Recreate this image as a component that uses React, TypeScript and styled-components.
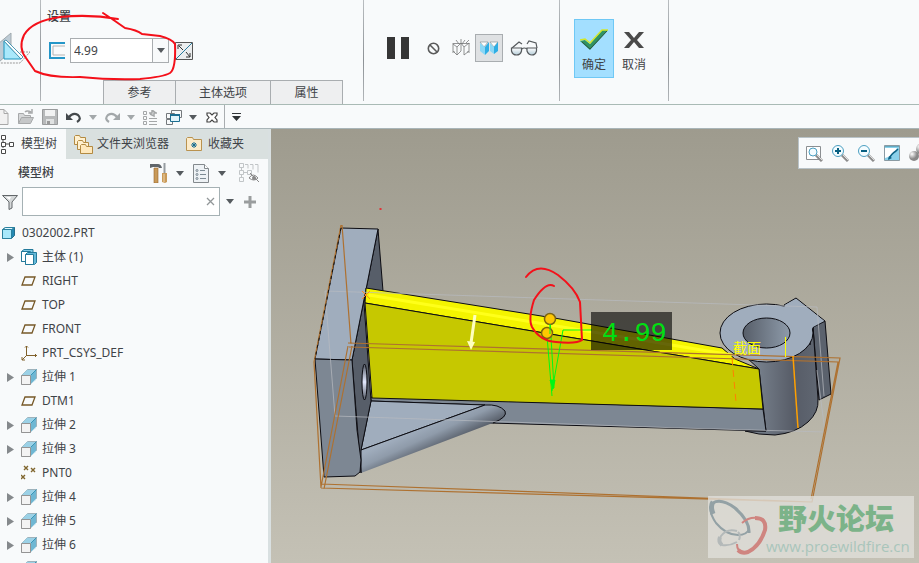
import React from "react";
import styled, { createGlobalStyle } from "styled-components";

const GlobalStyle = createGlobalStyle`
  * { box-sizing: border-box; }
  body { margin: 0; background: #f8fafb; }
  body, button, input {
    font-family: "Noto Sans", "Noto Sans CJK SC", sans-serif;
    font-size: 12px;
    line-height: 16px;
    color: #3f4347;
  }
  button { background: none; border: 0; padding: 0; cursor: pointer; }
  svg { display: block; flex: none; }
`;

const Page = styled.div`
  display: flex;
  flex-direction: column;
  height: 100vh;
  overflow: hidden;
`;

/* Ribbon */
const Ribbon = styled.header`
  position: relative;
  display: flex;
  flex: none;
  height: 105px;
  border-bottom: 1px solid #a9bab5;
`;
const Divider = styled.div`
  flex: none;
  width: 1px;
  margin-bottom: 3px;
  background: linear-gradient(#b9bdc0, #8d9296 60%, #b2b6b9);
`;
const FeatureSection = styled.section`
  flex: none;
  width: 40px;
  padding-top: 32px;
`;
const SettingsSection = styled.section`
  display: flex;
  flex-direction: column;
  flex: none;
  width: 322px;
  padding: 9px 0 0 6px;
`;
const SettingsTitle = styled.h2`
  margin: 0;
  font-size: 12px;
  line-height: 16px;
  font-weight: 500;
`;
const SettingsRow = styled.div`
  display: flex;
  align-items: center;
  gap: 5px;
  margin: 13px 0 17px 2px;
`;
const Combo = styled.label`
  display: flex;
  width: 99px;
  height: 25px;
  border: 1px solid #a9adb0;
  background: #fff;
`;
const ComboInput = styled.input`
  flex: 1;
  min-width: 0;
  padding: 0 3px;
  border: 0;
  outline: 0;
  background: transparent;
`;
const ComboButton = styled.button`
  display: grid;
  place-items: center;
  width: 16px;
  border-left: 1px solid #a9adb0;
  background: #f8fafb;
`;
const FlyoutTabs = styled.div`
  display: flex;
  margin-left: 56px;
  border-left: 1px solid #a9adb0;
`;
const FlyoutTab = styled.button<{ $wide?: boolean }>`
  width: ${(p) => (p.$wide ? 95 : 72)}px;
  height: 24px;
  border: 1px solid #a9adb0;
  border-width: 1px 1px 0 0;
  background: #eeeff0;
`;
const ControlSection = styled.section`
  display: flex;
  align-items: center;
  gap: 6px;
  flex: none;
  width: 195px;
  height: 96px;
  padding-left: 21px;
`;
const ControlGroup = styled.div`
  display: flex;
`;
const ControlButton = styled.button<{ $active?: boolean }>`
  display: grid;
  place-items: center;
  width: 28px;
  height: 28px;
  border: 1px solid ${(p) => (p.$active ? "#a9adb0" : "transparent")};
  background: ${(p) => (p.$active ? "#dfe1e3" : "none")};
`;
const ConfirmSection = styled.section`
  display: flex;
  align-items: flex-start;
  flex: none;
  width: 108px;
  padding: 19px 14px;
`;
const ConfirmButton = styled.button<{ $primary?: boolean }>`
  display: flex;
  flex-direction: column;
  align-items: center;
  justify-content: flex-end;
  gap: 6px;
  width: 40px;
  height: 59px;
  padding-bottom: 4px;
  border: 1px solid ${(p) => (p.$primary ? "#6fc8f5" : "transparent")};
  background: ${(p) => (p.$primary ? "#a3dfff" : "none")};
`;
const RibbonMarkup = styled.svg`
  position: absolute;
  top: 0;
  left: 0;
  pointer-events: none;
`;

/* Quick access bar */
const QuickBar = styled.nav`
  display: flex;
  align-items: center;
  flex: none;
  height: 24px;
  border-bottom: 1px solid #a9b5b8;
`;
const QuickButton = styled.button<{ $narrow?: boolean }>`
  display: grid;
  place-items: center;
  width: ${(p) => (p.$narrow ? 14 : 24)}px;
  height: 23px;
  padding-top: 1px;
`;
const QuickDivider = styled.div`
  width: 1px;
  height: 23px;
  margin-right: 4px;
  background: #a9adb0;
`;

/* Body */
const Workspace = styled.main`
  display: flex;
  flex: 1;
  min-height: 0;
`;
const Sidebar = styled.aside`
  display: flex;
  flex-direction: column;
  flex: none;
  width: 271px;
  border-right: 3px solid #d9e0e1;
  overflow: hidden;
`;
const SideTabs = styled.div`
  display: flex;
  flex: none;
  height: 30px;
  background: #d9e0df;
`;
const SideTab = styled.button<{ $active?: boolean }>`
  display: flex;
  align-items: center;
  gap: ${(p) => (p.$active ? 6 : 4)}px;
  padding: ${(p) => (p.$active ? "0 9px 0 0" : "0 8px")};
  background: ${(p) => (p.$active ? "#f8fafb" : "none")};
  white-space: nowrap;
`;
const TreeHeader = styled.div`
  display: flex;
  align-items: center;
  justify-content: space-between;
  flex: none;
  height: 28px;
  padding: 0 8px 0 18px;
`;
const TreeTools = styled.div`
  display: flex;
  width: 111px;

  & > :last-child {
    margin-left: auto;
  }
`;
const TreeTitle = styled.h3`
  margin: 0;
  font-size: 12px;
  line-height: 16px;
  font-weight: 500;
`;
const ToolButton = styled.button<{ $arrow?: boolean }>`
  display: grid;
  place-items: center;
  width: ${(p) => (p.$arrow ? 22 : 20)}px;
  height: 24px;
`;
const FilterRow = styled.div`
  display: flex;
  align-items: center;
  flex: none;
  height: 29px;
  padding-left: 2px;
  gap: 4px;
`;
const FilterField = styled.label`
  display: flex;
  align-items: center;
  width: 198px;
  height: 29px;
  padding-right: 3px;
  border: 1px solid #a5b1b4;
  background: #fff;
`;
const FilterInput = styled.input`
  flex: 1;
  min-width: 0;
  border: 0;
  outline: 0;
  background: transparent;
`;
const FilterButton = styled.button`
  display: grid;
  place-items: center;
  width: 12px;
  height: 20px;
`;
const Tree = styled.ul`
  margin: 0;
  padding: 5px 0 0;
  list-style: none;
`;
const TreeRow = styled.li<{ $root?: boolean }>`
  display: flex;
  align-items: center;
  height: 24px;
  padding-left: ${(p) => (p.$root ? 1 : 5)}px;
  gap: 5px;
  white-space: nowrap;
`;
const Toggle = styled.button`
  width: 11px;
  height: 16px;
  display: grid;
  place-items: center;
`;
const TogglePlaceholder = styled.span`
  width: 11px;
`;

/* Viewport */
const Viewport = styled.section`
  position: relative;
  flex: 1;
  min-width: 0;
  overflow: hidden;
  background: linear-gradient(#9e9b8e, #c4c1b5);
`;
const Scene = styled.svg`
  width: 100%;
  height: 100%;
`;
const ViewToolbar = styled.div`
  position: absolute;
  top: 8px;
  right: 0;
  display: flex;
  align-items: center;
  width: 121px;
  height: 32px;
  padding-left: 2px;
  border: 1px solid #b9c3c8;
  border-right: 0;
  background: #f8fafb;
  overflow: hidden;
`;
const ViewButton = styled.button`
  display: grid;
  place-items: center;
  flex: none;
  width: 26px;
  height: 26px;
`;
const Watermark = styled.div`
  position: absolute;
  right: 5px;
  bottom: 5px;
  display: flex;
  width: 206px;
  height: 62px;
  background: rgba(224, 222, 218, 0.8);
`;
const WatermarkText = styled.div`
  display: flex;
  flex-direction: column;
  margin-left: -3px;
`;
const WatermarkName = styled.strong`
  padding-left: 12px;
  font-family: "Noto Sans CJK SC", sans-serif;
  font-size: 29px;
  line-height: 42px;
  font-weight: 900;
  color: #7cb389;
`;
const WatermarkUrl = styled.a`
  font-family: "Open Sans", sans-serif;
  font-size: 15px;
  line-height: 16px;
  color: #a9c5bb;
  text-decoration: none;
`;

/* Icons */
const Down = ({ color = "#555a5e", size = 8 }: { color?: string; size?: number }) => (
  <svg width={size} height="5" viewBox="0 0 8 5"><path d="M0 0h8L4 5z" fill={color} /></svg>
);
const RibFeatureIcon = () => (
  <svg width="32" height="34" viewBox="0 0 32 34">
    <path d="M-2 12 11 1v18L-2 31z" fill="#bdcbd5" stroke="#a0a9ae" />
    <path d="M20 20h10L20 31H0" fill="none" stroke="#999" strokeDasharray="2 1" />
    <path d="M4 9v18h17z" fill="#a9e8fb" stroke="#1c93bd" />
    <path d="m4 9 17 18 2-2L6 8z" fill="#fff" stroke="#4f98b3" />
  </svg>
);
const ThicknessIcon = () => (
  <svg width="16" height="17" viewBox="0 0 16 17">
    <path d="M16 1H1v15h15" fill="none" stroke="#2496c8" strokeWidth="2" />
    <path d="M16 4H4v9h12" fill="none" stroke="#b4b4b4" />
  </svg>
);
const FlipIcon = () => (
  <svg width="18" height="18" viewBox="0 0 18 18">
    <path d="M.5.5h17v17H.5z" fill="#eceeef" stroke="#555" />
    <path d="M1 17 17 1" stroke="#27799c" />
    <path d="m4 4 4 4m3 2 4 5M3 7V3h4m8 8v4h-4" fill="none" stroke="#333" />
  </svg>
);
const PauseIcon = () => (
  <svg width="24" height="22" viewBox="0 0 24 22"><path d="M0 0h8v22H0zM14 0h8v22h-8z" fill="#363636" /></svg>
);
const NoneIcon = () => (
  <svg width="13" height="13" viewBox="0 0 13 13" fill="none" stroke="#5a5a5a" strokeWidth="1.600">
    <circle cx="6.5" cy="6.5" r="5.200" /><path d="m3 3 7 7" />
  </svg>
);
const WireIcon = () => (
  <svg width="20" height="18" viewBox="0 0 20 18" fill="none" stroke="#77797a" strokeWidth=".8">
    <path d="M1.500 4.500h17M6 8l-4-3v7l4 4zM6 8l4-4v8l-4 4M13 8l-3-4M13 8l5-4v8l-5 4zM5 1l3 4M14 1l-3 4M10 0v4M1 13h3M16 13h3M18 1l-3 3" />
  </svg>
);
const PreviewIcon = () => (
  <svg width="20" height="14" viewBox="0 0 20 14">
    <path d="M1 1h8L5 6zM11 1h8l-4 5z" fill="#fff" stroke="#8e969a" strokeWidth=".7" />
    <path d="m1 2 5 4v8l-5-4zM11 2l4 4v7l-4-3z" fill="#8bd7f5" />
    <path d="m6 6 4-5v9l-4 4zM15 6l4-5v9l-4 3z" fill="#2faee4" />
  </svg>
);
const GlassesIcon = () => (
  <svg width="28" height="16" viewBox="0 0 28 16" stroke="#55595c" strokeWidth="1.200">
    <defs><linearGradient id="lens" x2="0" y2="1"><stop stopColor="#fff" /><stop offset="1" stopColor="#b4ccd8" /></linearGradient></defs>
    <path d="m2 8 7-6 3 2M17 4l2-3 7 2 1 5M12 9q2-2 5 0" fill="none" />
    <path d="M1.500 8h10v3q-1 4-5 4t-5-4zM17 8h9.500v3q-1 4-4.500 4t-5-4z" fill="url(#lens)" />
  </svg>
);
const CheckIcon = () => (
  <svg width="28" height="22" viewBox="0 0 28 22">
    <path d="m0 12 5-1 5 4L22 1h6L10 21z" fill="#2f9465" />
    <path d="m0 11 5-1 5 4L22 1h6" fill="none" stroke="#d3e72b" strokeWidth="1.500" />
    <path d="m2 13 8 7L27 2" fill="none" stroke="#31573e" />
  </svg>
);
const CancelIcon = () => (
  <svg width="20" height="22" viewBox="0 0 20 22"><path d="M0 3h5l5 6 5-6h5l-7 8 7 8h-5l-5-6-5 6H0l7-8z" fill="#4a4a4a" /></svg>
);
const NewIcon = () => (
  <svg width="14" height="16" viewBox="0 0 14 16"><path d="M-2 .5h6l4 4v11H-2M4 .500v4h4" fill="#f1f1f1" stroke="#a8a8a8" /></svg>
);
const OpenIcon = () => (
  <svg width="16" height="16" viewBox="0 0 16 16" fill="#d6d8d9" stroke="#a7a9aa">
    <path d="M.5 14.500v-10h5l1 2h6v3" /><path d="m.5 14.500 3-6h12l-3 6z" fill="#c5c7c8" /><path d="M7 3q2-2 6 0m1-3v4h-4" fill="none" strokeWidth="1.500" />
  </svg>
);
const SaveIcon = () => (
  <svg width="16" height="16" viewBox="0 0 16 16">
    <path d="M.5.5h15v15H.5z" fill="#b7b9ba" stroke="#999b9c" /><path d="M3 1h10v6H3z" fill="#f1f2f2" /><path d="M4 10h8v5H4z" fill="#e0e2e2" /><path d="M5 12h3v3H5z" fill="#999" />
  </svg>
);
const UndoIcon = ({ redo = false }: { redo?: boolean }) => (
  <svg width="16" height="13" viewBox="0 0 16 13">
    <g transform={redo ? "matrix(-1 0 0 1 16 0)" : undefined} stroke={redo ? "#a3a8aa" : "#44494c"} fill="none">
      <path d="M3 6q4-5 9-2 4 4-1 7" strokeWidth="2.200" /><path d="M0 2v7h7z" stroke="none" fill={redo ? "#a3a8aa" : "#44494c"} />
    </g>
  </svg>
);
const RegenIcon = () => (
  <svg width="15" height="15" viewBox="0 0 15 15" fill="none" stroke="#a4a7a8">
    <path d="M.5 1.500h3v3h-3zM.5 6.500h3v3h-3zM.5 11.500h3v3h-3z" /><path d="M6 8.500h8M6 11.500h8M6 14.500h8" /><path d="M6 3h3V0l4 3M14 3h-3v3L7 4" strokeWidth="1.500" />
  </svg>
);
const WindowsIcon = () => (
  <svg width="16" height="15" viewBox="0 0 16 15">
    <path d="M5.500.500h10v7h-10zM.5 3.500h8v5h-8zM.500 9.500h6v5h-6z" fill="#f8fafb" stroke="#74797c" /><path d="M4.500 4.500h9v7h-9z" fill="#e2f4fb" stroke="#1c6e91" /><path d="M4 5h10" stroke="#1c6e91" strokeWidth="2" />
  </svg>
);
const CloseWindowIcon = () => (
  <svg width="12" height="11" viewBox="0 0 12 11"><path d="M1 1h3l2 2 2-2h3v2L9 5.500 11 8v2H8L6 8l-2 2H1V8l2-2.500L1 3z" fill="#fff" stroke="#444" strokeWidth="1.200" /></svg>
);
const MoreIcon = () => (
  <svg width="9" height="8" viewBox="0 0 9 8"><path d="M0 0h9v1H0zM0 3h9L4.500 8z" fill="#303437" /></svg>
);
const ModelTreeIcon = () => (
  <svg width="15" height="20" viewBox="0 0 15 20" fill="#fff" stroke="#4a4a4a">
    <path d="M3 6v8M5 10h4" /><path d="M1.500 1.500h4v4h-4zM1.500 8.500h4v4h-4zM1.500 15.500h4v4h-4zM9.500 8.500h4v4h-4z" />
  </svg>
);
const FoldersIcon = () => (
  <svg width="19" height="19" viewBox="0 0 19 19" stroke="#b38a42">
    <path d="M.5 9.500v-8l1-1h4l1 2h5v7z" fill="#fff0cf" /><path d="M3.500 14.500v-8l1-1h4l1 2h5v7z" fill="#fff0cf" /><path d="M6.500 18.500v-8l1-1h4l1 2h6v7z" fill="#ffe8bb" />
  </svg>
);
const FavoriteIcon = () => (
  <svg width="19" height="16" viewBox="0 0 19 16">
    <path d="M1.500 14.500v-12l1-1h5l1 2h8v11z" fill="#fcebc9" stroke="#b9924f" /><path d="M9 6v6M7 7l4 4M11 7l-4 4M6 9h6" stroke="#176c91" />
  </svg>
);
const ToolsIcon = () => (
  <svg width="18" height="20" viewBox="0 0 18 20">
    <path d="M0 1h8q3 0 4 4H9L8 4H3L0 5z" fill="#60666b" /><path d="M4 5h4v15H4z" fill="#c99a59" stroke="#97672e" strokeWidth=".6" />
    <path d="M13.500 0h2v10h-2z" fill="#969ca0" /><path d="M12 10h5v9l-2 1-3-1z" fill="#c99a59" /><path d="M14 11v8" stroke="#eed4ab" />
  </svg>
);
const SettingsPageIcon = () => (
  <svg width="16" height="19" viewBox="0 0 16 19">
    <path d="M.5.500h11l4 4v14H.500z" fill="#eef2f5" stroke="#83898d" /><path d="M11.500.500v4h4" fill="#fff" stroke="#83898d" />
    <g stroke="#60707b" fill="none" strokeWidth=".8"><circle cx="4" cy="6.500" r="1" /><circle cx="4" cy="10.500" r="1" /><circle cx="4" cy="14.500" r="1" /><path d="M7 6.500h5M7 10.500h6M7 14.500h6" /></g>
  </svg>
);
const HiddenTreeIcon = () => (
  <svg width="20" height="20" viewBox="0 0 20 20" fill="none" stroke="#c1c5c7">
    <path d="M.5.500h4v4h-4zM.5 7.500h4v4h-4zM.5 14.500h4v4h-4zM8.500 7.500h4v4h-4zM6 1.500h3v4M11 1.500h3v5M16 1.500h3v8M2.500 5v2M2.500 12v2M5 9.500h3" />
    <path d="M10 15q4-6 9 0-4 4-9 0m1-5 9 9" stroke="#888" /><circle cx="15" cy="15" r="2" fill="#888" stroke="none" />
  </svg>
);
const FunnelIcon = () => (
  <svg width="16" height="16" viewBox="0 0 16 16"><path d="M.5 1.500h15L10 8v6l-3 1.500V8z" fill="#d5d8d9" stroke="#62676a" /><path d="M4 3h5L7.500 6z" fill="#fff" /></svg>
);
const ClearIcon = () => (
  <svg width="9" height="9" viewBox="0 0 9 9"><path d="m1 1 7 7m0-7L1 8" stroke="#929799" strokeWidth="1.300" /></svg>
);
const PlusIcon = () => (
  <svg width="12" height="12" viewBox="0 0 12 12"><path d="M6 0v12M0 6h12" stroke="#9a9d9e" strokeWidth="3" /></svg>
);
const PartIcon = () => (
  <svg width="16" height="16" viewBox="0 0 16 16">
    <path d="m1.500 4.500 3-2h9v8l-3 3h-9z" fill="#2489b3" stroke="#276f8b" /><path d="m1.500 4.500 3-2h9l-3 2z" fill="#dff8ff" stroke="#2b819f" /><path d="M1.500 4.500h9v9h-9z" fill="#a8e8fb" stroke="#2b819f" />
  </svg>
);
const BodyIcon = () => (
  <svg width="16" height="16" viewBox="0 0 16 16" stroke="#247a9b">
    <path d="M.5 2.500 3 .500h9v10l-2 2H.500z" fill="#80cae5" /><path d="M.5 2.500h9v10h-9z" fill="#fff" />
    <path d="m4.500 5.500 2-2h9v10l-2 2h-9z" fill="#64b8d8" /><path d="M4.500 5.500h8v10h-8z" fill="#fff" />
  </svg>
);
const PlaneIcon = () => (
  <svg width="16" height="16" viewBox="0 0 16 16"><path d="M4 4h10l-3 8H1z" fill="none" stroke="#765827" strokeWidth="1.300" /></svg>
);
const CsysIcon = () => (
  <svg width="16" height="16" viewBox="0 0 16 16" fill="none" stroke="#80602a"><path d="M5.500 11V1M4 2.500 5.500 1 7 2.500M5.500 10.500H16M14 9l1.500 1.500L14 12M5.500 10.500 1 15M1 12v3h3" /></svg>
);
const PointsIcon = () => (
  <svg width="16" height="16" viewBox="0 0 16 16" stroke="#80662e" strokeWidth="1.400"><path d="m3 1 4 4m0-4L3 5m7-2 4 4m0-4-4 4M0 10l4 4m0-4-4 4" /></svg>
);
const ExtrudeIcon = () => (
  <svg width="16" height="16" viewBox="0 0 16 16">
    <path d="m.5 6.500 6-6h9v9l-6 6H.500z" fill="#c5eaf7" stroke="#9eb2bb" /><path d="m1 6 5-5h9l-5 5z" fill="#9bd1e6" /><path d="m10 6 5-5v10l-5 4z" fill="#6fb7d3" /><path d="m10 15 5-5v1l-4 4z" fill="#fff" /><path d="m9.500 6.500 6-6" stroke="#3895b6" /><path d="M.5 6.500h9v9h-9z" fill="#f3f3f3" stroke="#949494" />
  </svg>
);
const Lens = ({ sign }: { sign: "fit" | "in" | "out" }) => (
  <svg width="17" height="17" viewBox="0 0 17 17" fill="none">
    {sign === "fit" && <path d="M.5 1.500h14v13H.500z" fill="#fff" stroke="#8b8f92" />}
    <path d="m10 10 6 6" stroke="#8c8c8c" strokeWidth="3" /><path d="m11 10 5 5" stroke="#ddd" />
    <circle cx={sign === "fit" ? 7 : 6} cy={sign === "fit" ? 7 : 6} r={sign === "fit" ? 4 : 5.500} fill="#f4fcff" stroke="#4b9fc1" />
    {sign !== "fit" && <path d={sign === "in" ? "M3 6h6M6 3v6" : "M3 6h6"} stroke="#086082" strokeWidth="2" />}
  </svg>
);
const RepaintIcon = () => (
  <svg width="17" height="16" viewBox="0 0 17 16"><path d="M.5.500h15v15H.500z" fill="#8bd1ea" stroke="#8a9ba3" /><path d="M1 3h12Q9 11 1 13z" fill="#fff" /><path d="M1 1h14v1H1z" fill="#64a9c1" /><path d="M5 14q2-5 7-8l2-2" stroke="#0f6385" strokeWidth="1.500" fill="none" /><path d="m4 15 1-4 3 2z" fill="#0f6385" /></svg>
);
const ShadeIcon = () => (
  <svg width="20" height="18" viewBox="0 0 20 18"><defs><radialGradient id="ball" cx=".3" cy=".3"><stop stopColor="#fff" /><stop offset="1" stopColor="#888" /></radialGradient></defs><circle cx="14" cy="5" r="6" fill="url(#ball)" /><circle cx="6" cy="12" r="5" fill="url(#ball)" /></svg>
);

type NodeKind = "part" | "body" | "plane" | "csys" | "extrude" | "points";
const nodeIcons: Record<NodeKind, React.FC> = {
  part: PartIcon, body: BodyIcon, plane: PlaneIcon, csys: CsysIcon, extrude: ExtrudeIcon, points: PointsIcon,
};
const nodes: { label: string; kind: NodeKind }[] = [
  { label: "主体 (1)", kind: "body" },
  { label: "RIGHT", kind: "plane" },
  { label: "TOP", kind: "plane" },
  { label: "FRONT", kind: "plane" },
  { label: "PRT_CSYS_DEF", kind: "csys" },
  { label: "拉伸 1", kind: "extrude" },
  { label: "DTM1", kind: "plane" },
  { label: "拉伸 2", kind: "extrude" },
  { label: "拉伸 3", kind: "extrude" },
  { label: "PNT0", kind: "points" },
  { label: "拉伸 4", kind: "extrude" },
  { label: "拉伸 5", kind: "extrude" },
  { label: "拉伸 6", kind: "extrude" },
  { label: "", kind: "extrude" },
];

const TreeNode = ({ label, kind }: { label: string; kind: NodeKind }) => {
  const Icon = nodeIcons[kind];
  const expandable = label !== "" && (kind === "extrude" || kind === "body");
  return (
    <TreeRow>
      {expandable ? (
        <Toggle aria-label={`展开 ${label}`}>
          <svg width="7" height="9" viewBox="0 0 7 9"><path d="M0 0v9l7-4.500z" fill="#85898c" /></svg>
        </Toggle>
      ) : <TogglePlaceholder />}
      <Icon />
      <span>{label}</span>
    </TreeRow>
  );
};

const ModelScene = () => (
  <Scene viewBox="271 129 648 434" preserveAspectRatio="xMinYMin meet" role="img" aria-label="0302002.PRT">
    <defs>
      <linearGradient id="cyl" gradientUnits="userSpaceOnUse" x1="420" y1="427" x2="431" y2="451"><stop stopColor="#a0adbd" /><stop offset=".45" stopColor="#8f9baa" /><stop offset="1" stopColor="#59606b" /></linearGradient>
      <linearGradient id="boss"><stop stopColor="#7d8793" /><stop offset=".3" stopColor="#7d8793" /><stop offset=".75" stopColor="#575c67" /><stop offset="1" stopColor="#606772" /></linearGradient>
      <linearGradient id="bore"><stop stopColor="#575e69" /><stop offset="1" stopColor="#8e9baa" /></linearGradient>
      <linearGradient id="pin" x2="0" y2="1"><stop stopColor="#4f5661" /><stop offset=".5" stopColor="#e4eaff" /><stop offset="1" stopColor="#4f5661" /></linearGradient>
    </defs>
    <g stroke="#0c0c12" strokeLinejoin="round">
      <path d="M813 327 825 321 831 394 819 400z" fill="#5b626d" />
      <path d="M720 333 759 369 766 431 745 431Q758 435 775 435 796 433 808 422 819 412 818 399L813 327z" fill="url(#boss)" />
      <path d="M784 305 796 298 825 321 813 327 810 345z" fill="#a0adbd" />
      <ellipse cx="766.5" cy="333" rx="46.500" ry="29" fill="#a0adbd" />
      <path d="M785 305 796 299 824 321 813 327 805 340 780 320z" fill="#a0adbd" stroke="none" />
      <ellipse cx="766.5" cy="333" rx="23.500" ry="15" fill="url(#bore)" />
      <path d="M371 397 763 409 766 431 490 423 485 405 371 401z" fill="#7d8793" />
      <path d="M371 401 485 405 361 450z" fill="#a0adbd" />
      <path d="M361 450 485 405Q499 404 505 411 509 418 490 424L361 473z" fill="url(#cyl)" stroke="none" />
      <path d="M361 450 485 405Q499 404 505 411 508 417 493 423" fill="none" />
      <path d="M378 229 383 291 366 289 364 303 371 401 361 450 361 473 352 360z" fill="#575e69" />
      <path d="M341 228 378 229 352 360 315 359z" fill="#a0adbd" />
      <path d="M315 359 352 360 357 430 361 460 360 472 355 476 324 477z" fill="#7d8793" />
      <ellipse cx="364.5" cy="382" rx="2.500" ry="18" fill="url(#pin)" />
      <path d="M366 288 560 319 722 348 735 359 759 369 365 303z" fill="#f4f400" />
      <path d="M365 303 759 369 763 409 372 398z" fill="#c6c800" />
    </g>
    <path d="M369 295 732 355" stroke="#ffff1a" strokeWidth="3" />
    <g fill="none" stroke="#b8bbc1">
      <path d="M325 291 600 300 817 307 824 396M817 370 825 432 680 428 335 416 325 291" opacity=".7" />
    </g>
    <g fill="none" stroke="#ae7130">
      <path d="M341 225 314 362 321 488M342 225 351 344M348 346 321 487M352 346 324 489M348 343 840 358 812 502 321 484M349 347 838 362 811 499M321 488 811 502" strokeWidth="1.200" />
      <path d="M341 228 315 359" stroke="#111" strokeDasharray="3 4" />
      <path d="M793 356 798 428" stroke="#ffa000" strokeWidth="1.500" /><path d="M732 358 736 402" stroke="#ff8000" strokeDasharray="7 5" />
      <path d="m362 291 8 8m0-8-8 8" stroke="#ff8b20" />
    </g>
    <path d="m475 315-4 28" stroke="#ffffbf" strokeWidth="3" /><path d="m467 341 8 1-4 8z" fill="#ffffbf" />
    <g fill="none" stroke="#00f814">
      <path d="M547 336 552 396M550 320 554 388M592 330H563L552 391" /><path d="m550 380 3 9 2-9z" fill="#00f814" />
    </g>
    <g fill="#ffc800" stroke="#7d6510" strokeWidth="1.500"><circle cx="550" cy="319" r="5.500" /><circle cx="547" cy="333" r="5.500" /></g>
    <path d="M550 324v10" stroke="#00f814" />
    <path d="M591 312h81v38h-81z" fill="#000" opacity=".6" />
    <text x="602" y="341" fill="#00e012" fontFamily="Liberation Mono, monospace" fontSize="27">4.99</text>
    <text x="733" y="353" fill="#ffff00" fontFamily="Noto Sans CJK SC, sans-serif" fontSize="14">截面</text>
    <path d="M785.5 337v20" stroke="#ffff00" />
    <g fill="none" stroke="#f4101a" strokeWidth="2" strokeLinecap="round">
      <path d="M526 277Q538 261 558 275 575 288 580 302L582 340Q577 344 556 342 540 341 532 327 528 319 534 300 546 281 554 286" />
      <path d="M380 209h1" strokeWidth="1.500" />
    </g>
  </Scene>
);

const WatermarkLogo = () => (
  <svg width="61" height="62" viewBox="0 0 61 62" fill="none">
    <path d="M5 7Q13 2 27 12 42 25 41 37" stroke="#93a1a5" strokeWidth="3" />
    <path d="M5 7Q-1 14 8 27 18 39 30 39 39 39 41 33" stroke="#93a1a5" strokeWidth="2" />
    <path d="M5 6Q2 10 5 18" stroke="#93a1a5" strokeWidth="5" />
    <path d="M29 35Q19 32 13 40 9 46 14 49 22 50 29 46M30 36Q33 39 31 44" stroke="#b4b9b9" strokeWidth="2" />
    <path d="M12 41Q10 46 14 49" stroke="#b4b9b9" strokeWidth="4" />
    <path d="M34 27Q41 21 49 22M29 48Q29 55 35 57" stroke="#cf8580" strokeWidth="2" />
    <path d="M47 22Q59 22 57 34 52 50 40 56 34 58 30 54" stroke="#cf8580" strokeWidth="4" />
  </svg>
);

export default function App() {
  return (
    <Page>
      <GlobalStyle />
      <Ribbon>
        <FeatureSection><RibFeatureIcon /></FeatureSection>
        <Divider />
        <SettingsSection>
          <SettingsTitle>设置</SettingsTitle>
          <SettingsRow>
            <ThicknessIcon />
            <Combo>
              <ComboInput aria-label="厚度" defaultValue="4.99" />
              <ComboButton aria-label="厚度列表"><Down /></ComboButton>
            </Combo>
            <ToolButton aria-label="反向"><FlipIcon /></ToolButton>
          </SettingsRow>
          <FlyoutTabs>
            <FlyoutTab>参考</FlyoutTab>
            <FlyoutTab $wide>主体选项</FlyoutTab>
            <FlyoutTab>属性</FlyoutTab>
          </FlyoutTabs>
        </SettingsSection>
        <Divider />
        <ControlSection>
          <ControlButton aria-label="暂停"><PauseIcon /></ControlButton>
          <ControlGroup>
            <ControlButton aria-label="无预览"><NoneIcon /></ControlButton>
            <ControlButton aria-label="分离"><WireIcon /></ControlButton>
            <ControlButton aria-label="连接" $active><PreviewIcon /></ControlButton>
          </ControlGroup>
          <ControlButton aria-label="预览"><GlassesIcon /></ControlButton>
        </ControlSection>
        <Divider />
        <ConfirmSection>
          <ConfirmButton $primary><CheckIcon />确定</ConfirmButton>
          <ConfirmButton><CancelIcon />取消</ConfirmButton>
        </ConfirmSection>
        <Divider />
        <RibbonMarkup width="200" height="84" viewBox="0 0 200 84" fill="none" stroke="#f4101a" strokeWidth="2" strokeLinecap="round" strokeLinejoin="round">
          <path d="M118 19Q90 14 60 17 32 21 24 35 18 48 26 58L35 71Q50 78 80 77 110 80 140 79 163 77 170 73 176 69 175 44 172 39 160 36L142 34Q137 30 125 28L115 21 103 13" />
        </RibbonMarkup>
      </Ribbon>

      <QuickBar aria-label="快速访问工具栏">
        <QuickButton $narrow aria-label="新建"><NewIcon /></QuickButton>
        <QuickButton aria-label="打开"><OpenIcon /></QuickButton>
        <QuickButton aria-label="保存"><SaveIcon /></QuickButton>
        <QuickButton aria-label="撤消"><UndoIcon /></QuickButton>
        <QuickButton $narrow aria-label="撤消列表"><Down color="#a3a8aa" /></QuickButton>
        <QuickButton aria-label="重做"><UndoIcon redo /></QuickButton>
        <QuickButton $narrow aria-label="重做列表"><Down color="#a3a8aa" /></QuickButton>
        <QuickButton aria-label="重新生成"><RegenIcon /></QuickButton>
        <QuickButton aria-label="窗口"><WindowsIcon /></QuickButton>
        <QuickButton $narrow aria-label="窗口列表"><Down /></QuickButton>
        <QuickButton aria-label="关闭"><CloseWindowIcon /></QuickButton>
        <QuickDivider />
        <QuickButton $narrow aria-label="自定义"><MoreIcon /></QuickButton>
      </QuickBar>

      <Workspace>
        <Sidebar>
          <SideTabs>
            <SideTab $active><ModelTreeIcon />模型树</SideTab>
            <SideTab><FoldersIcon />文件夹浏览器</SideTab>
            <SideTab><FavoriteIcon />收藏夹</SideTab>
          </SideTabs>
          <TreeHeader>
            <TreeTitle>模型树</TreeTitle>
            <TreeTools>
              <ToolButton aria-label="工具"><ToolsIcon /></ToolButton>
              <ToolButton $arrow aria-label="工具列表"><Down /></ToolButton>
              <ToolButton aria-label="设置"><SettingsPageIcon /></ToolButton>
              <ToolButton $arrow aria-label="设置列表"><Down /></ToolButton>
              <ToolButton $arrow aria-label="显示"><HiddenTreeIcon /></ToolButton>
            </TreeTools>
          </TreeHeader>
          <FilterRow>
            <FunnelIcon />
            <FilterField>
              <FilterInput aria-label="过滤" />
              <FilterButton aria-label="清除"><ClearIcon /></FilterButton>
            </FilterField>
            <FilterButton aria-label="过滤列表"><Down /></FilterButton>
            <ToolButton aria-label="添加"><PlusIcon /></ToolButton>
          </FilterRow>
          <Tree>
            <TreeRow $root><PartIcon /><span>0302002.PRT</span></TreeRow>
            {nodes.map((n, i) => <TreeNode key={i} {...n} />)}
          </Tree>
        </Sidebar>
        <Viewport>
          <ModelScene />
          <ViewToolbar>
            <ViewButton aria-label="重新调整"><Lens sign="fit" /></ViewButton>
            <ViewButton aria-label="放大"><Lens sign="in" /></ViewButton>
            <ViewButton aria-label="缩小"><Lens sign="out" /></ViewButton>
            <ViewButton aria-label="重画"><RepaintIcon /></ViewButton>
            <ViewButton aria-label="显示样式"><ShadeIcon /></ViewButton>
          </ViewToolbar>
          <Watermark>
            <WatermarkLogo />
            <WatermarkText>
              <WatermarkName>野火论坛</WatermarkName>
              <WatermarkUrl href="#">www.proewildfire.cn</WatermarkUrl>
            </WatermarkText>
          </Watermark>
        </Viewport>
      </Workspace>
    </Page>
  );
}
